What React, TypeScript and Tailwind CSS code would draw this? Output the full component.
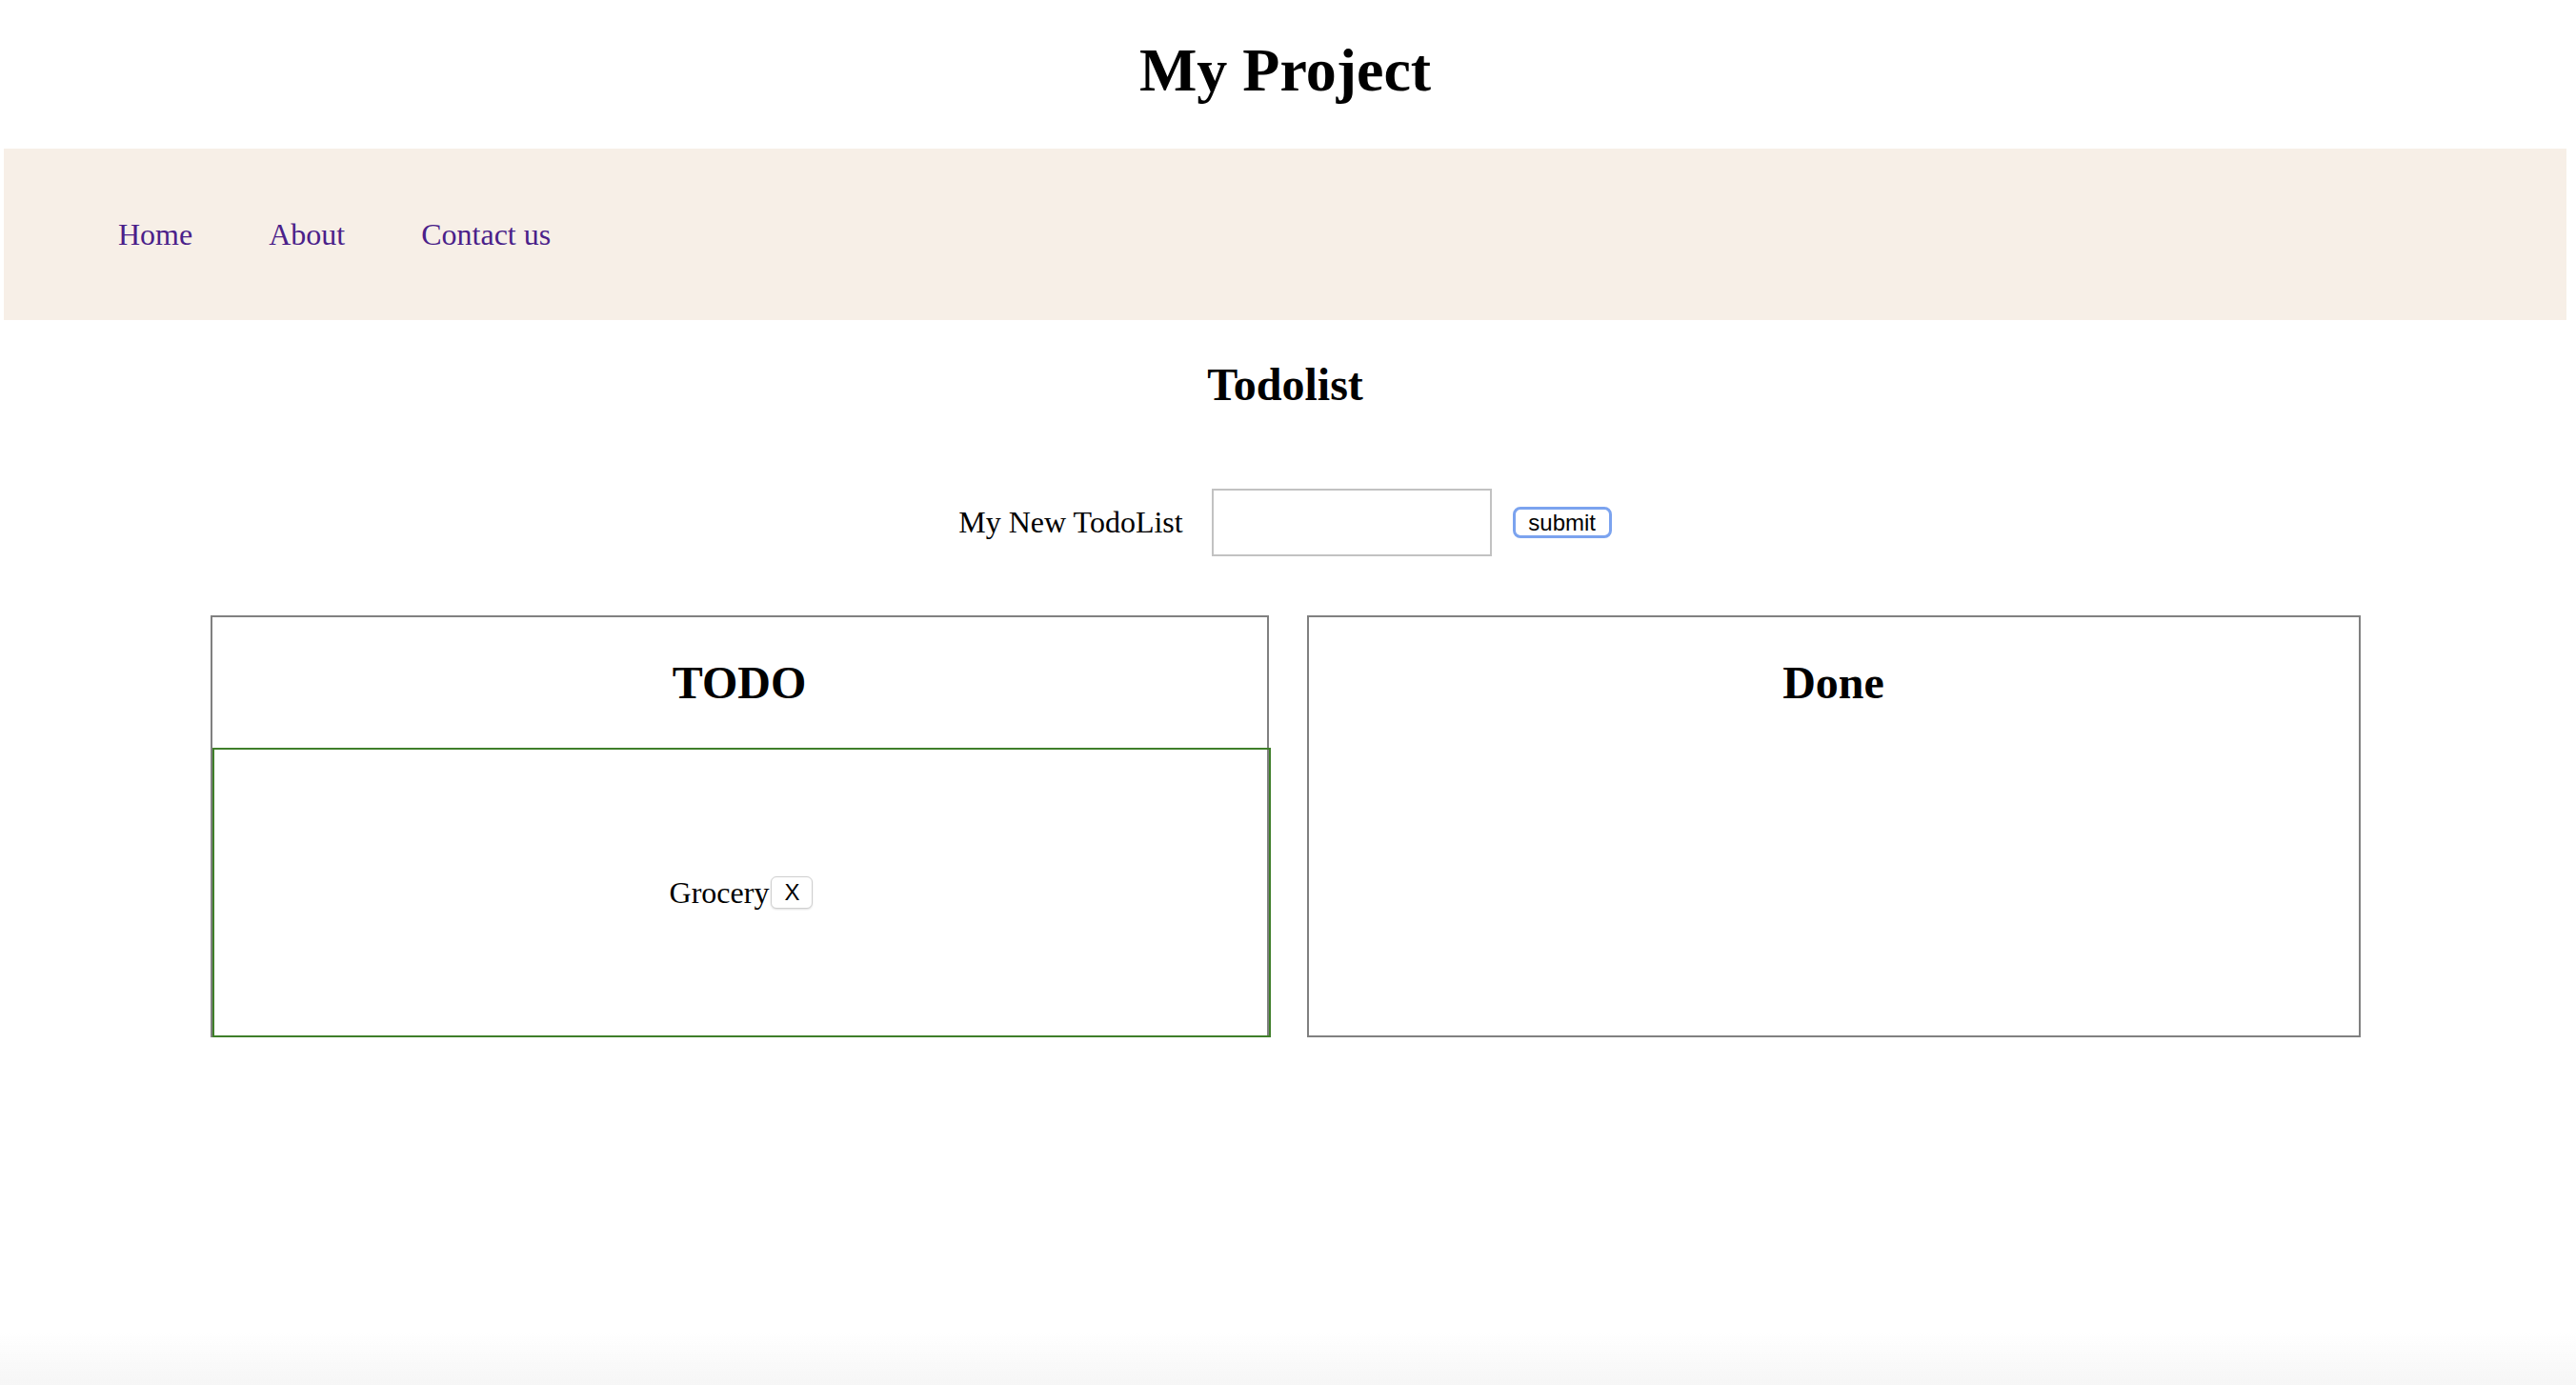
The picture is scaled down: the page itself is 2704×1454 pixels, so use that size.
import React, { useState } from 'react';

const navLinks = ['Home', 'About', 'Contact us'];

const App: React.FC = () => {
    const [todos, setTodos] = useState<string[]>(['Grocery']);
    const [done] = useState<string[]>([]);
    const [text, setText] = useState('');

    const addTodo = () => {
        if (!text.trim()) return;
        setTodos((prev) => [...prev, text.trim()]);
        setText('');
    };

    return (
        <div className="min-h-screen bg-white pl-[4px] pr-[10px] text-black font-['Liberation_Serif',serif]">
            <h1 className="pt-[37px] mb-[45px] text-center text-[64px] font-bold leading-[74px]">My Project</h1>

            <nav className="flex h-[180px] items-center gap-[80px] bg-[#f7efe7] pl-[120px]">
                {navLinks.map((link) => (
                    <a key={link} href="#" className="text-[32px] leading-[37px] text-[#4b1f8a]">
                        {link}
                    </a>
                ))}
            </nav>

            <h2 className="mt-[40px] text-center text-[48px] font-bold leading-[55px]">Todolist</h2>

            <div className="mt-[82px] flex h-[71px] items-center justify-center">
                <label className="text-[32px] leading-[37px]">My New TodoList</label>
                <input
                    className="ml-[30px] h-[71px] w-[294px] border-2 border-[#c2c2c2] bg-white px-2 text-[28px] outline-none"
                    value={text}
                    onChange={(e) => setText(e.target.value)}
                />
                <button
                    className="ml-[22px] flex h-[33px] w-[104px] items-center justify-center rounded-[8px] border-[3px] border-[#7ba3ef] bg-white pt-[1px] text-[24px] leading-none font-['Liberation_Sans',sans-serif]"
                    onClick={addTodo}
                >
                    submit
                </button>
            </div>

            <div className="mt-[62px] flex justify-center gap-[40px]">
                <div className="flex w-[1111px] flex-col border-2 border-[#808080]">
                    <h2 className="pt-[41px] pb-[41px] text-center text-[48px] font-bold leading-[55px]">TODO</h2>
                    <div className="-mb-[2px] flex h-[304px] w-[calc(100%+4px)] items-center justify-center border-2 border-[#3f7f2a]">
                        {todos.map((todo) => (
                            <div key={todo} className="flex items-center">
                                <span className="text-[32px] leading-[37px]">{todo}</span>
                                <button
                                    className="ml-[2px] flex h-[34px] w-[44px] items-center justify-center rounded-[6px] border border-[#cfcfcf] bg-white text-[24px] leading-none shadow-[0_1px_2px_rgba(0,0,0,0.12)] font-['Liberation_Sans',sans-serif]"
                                    onClick={() => setTodos((prev) => prev.filter((t) => t !== todo))}
                                >
                                    X
                                </button>
                            </div>
                        ))}
                    </div>
                </div>

                <div className="flex w-[1106px] flex-col border-2 border-[#808080]">
                    <h2 className="pt-[41px] pb-[41px] text-center text-[48px] font-bold leading-[55px]">Done</h2>
                    {done.map((item) => (
                        <p key={item} className="text-center text-[32px]">{item}</p>
                    ))}
                </div>
            </div>

            <div className="pointer-events-none fixed inset-x-0 bottom-0 h-[56px] bg-linear-to-b from-white/0 to-[#f6f6f6]" />
        </div>
    );
};

export default App;
